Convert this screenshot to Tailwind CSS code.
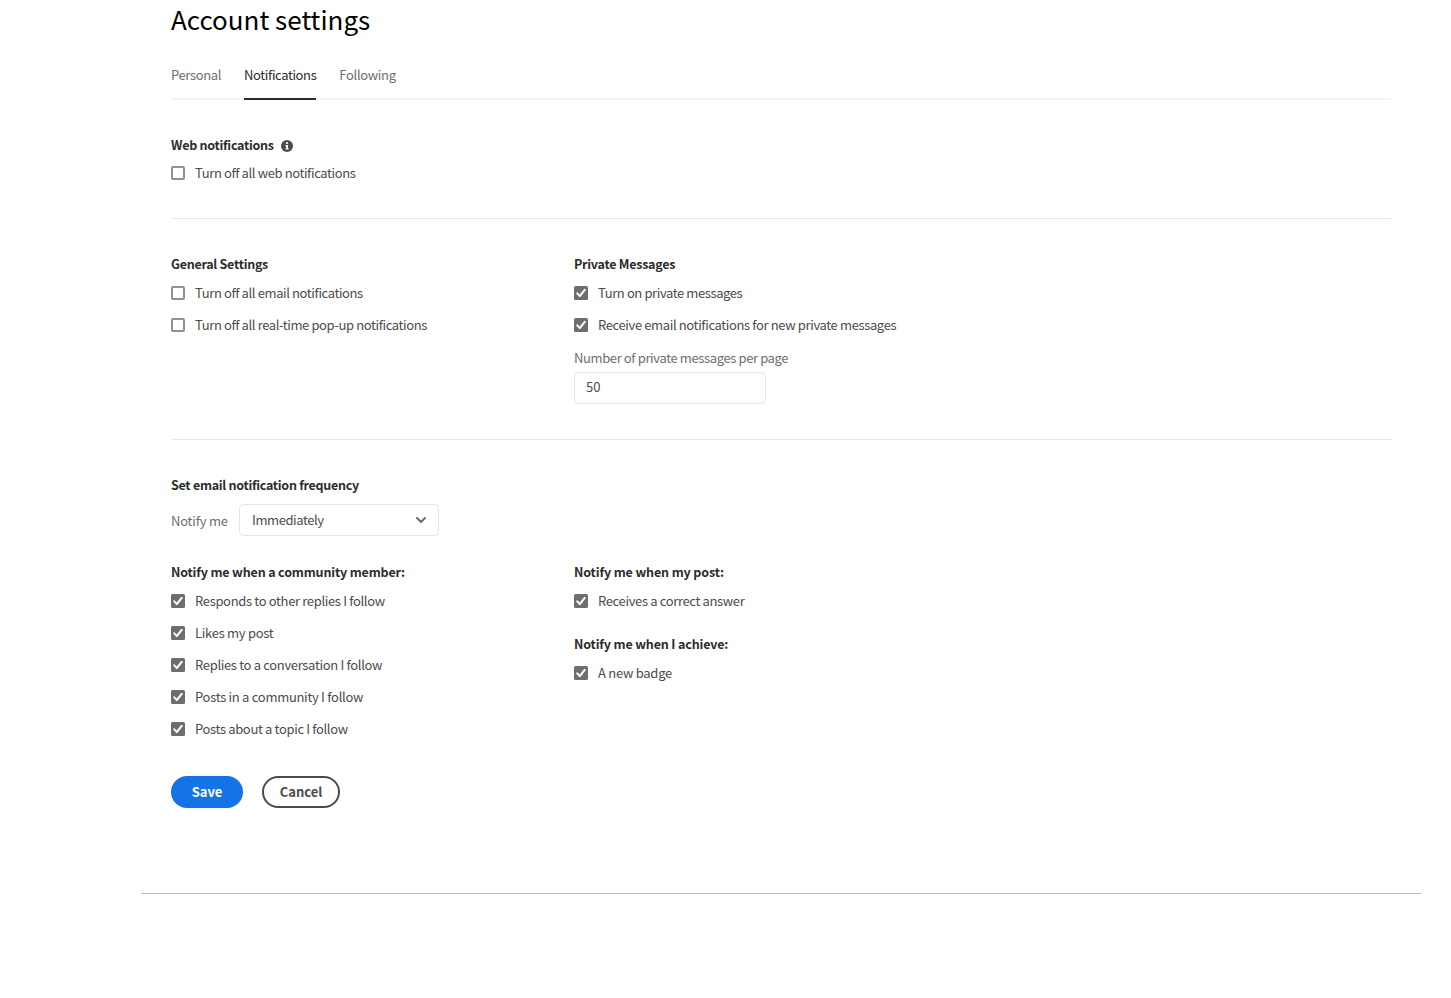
<!DOCTYPE html>
<html lang="en">
<head>
  <meta charset="UTF-8">
  <meta name="viewport" content="width=device-width, initial-scale=1.0">
  <title>Account settings</title>
  <script src="https://cdn.jsdelivr.net/npm/@tailwindcss/browser@4"></script>
</head>
<body class="min-h-screen bg-white overflow-hidden font-['Noto_Sans_CJK_SC','Noto_Sans',sans-serif] text-[13px] leading-5 text-[#4b4b4b]">
  <!-- Shared icons -->
  <svg class="hidden">
    <symbol id="check" viewBox="0 0 14 14">
      <rect width="14" height="14" rx="1.5" fill="#6e6e6e"/>
      <path d="M3.3 7.3L5.8 10.1L10.7 3.9" fill="none" stroke="#fff" stroke-width="2" stroke-linecap="round" stroke-linejoin="round"/>
    </symbol>
    <symbol id="box" viewBox="0 0 14 14">
      <rect x="1" y="1" width="12" height="12" rx="1" fill="#fff" stroke="#909090" stroke-width="2"/>
    </symbol>
  </svg>

  <main class="ml-[141px] w-[1280px] h-[894px] px-[30px] border-b border-[#bcbcbc]">
    <h1 class="h-10 pt-px text-[26px] leading-9 text-black">Account settings</h1>

    <nav class="flex gap-[23px] h-[60px] border-b-2 border-[#f4f4f4] pt-[25px] text-[#6e6e6e]">
      <a href="#" class="tracking-[-0.36px]">Personal</a>
      <a href="#" class="h-[35px] border-b-2 border-[#2c2c2c] text-[#2c2c2c] tracking-[-0.39px]">Notifications</a>
      <a href="#" class="tracking-[-0.33px]">Following</a>
    </nav>

    <section class="h-[119px] pt-[35px] border-b border-[#e6e6e6]">
      <h2 class="flex items-center font-bold text-[12.5px] text-[#2c2c2c]">
        <span class="tracking-[-0.27px]">Web notifications</span>
        <svg class="ml-[7px] mt-px size-3" viewBox="0 0 12 12">
          <circle cx="6" cy="6" r="6" fill="#4b4b4b"/>
          <circle cx="6" cy="3" r="1.1" fill="#fff"/>
          <path d="M4.5 5H7V8.4H7.8V9.6H4.4V8.4H5.2V6.2H4.5Z" fill="#fff"/>
        </svg>
      </h2>
      <label class="flex items-center gap-2.5 mt-2"><svg class="size-3.5"><use href="#box"/></svg><span class="tracking-[-0.39px]">Turn off all web notifications</span></label>
    </section>

    <section class="grid grid-cols-[403px_1fr] h-[221px] pt-[35px] border-b border-[#e6e6e6]">
      <div>
        <h2 class="font-bold text-[12.5px] text-[#2c2c2c] tracking-[-0.27px]">General Settings</h2>
        <div class="flex flex-col gap-3 mt-[9px]">
          <label class="flex items-center gap-2.5"><svg class="size-3.5"><use href="#box"/></svg><span class="tracking-[-0.39px]">Turn off all email notifications</span></label>
          <label class="flex items-center gap-2.5"><svg class="size-3.5"><use href="#box"/></svg><span class="tracking-[-0.39px]">Turn off all real-time pop-up notifications</span></label>
        </div>
      </div>
      <div>
        <h2 class="font-bold text-[12.5px] text-[#2c2c2c] tracking-[-0.25px]">Private Messages</h2>
        <div class="flex flex-col gap-3 mt-[9px]">
          <label class="flex items-center gap-2.5"><svg class="size-3.5"><use href="#check"/></svg><span class="tracking-[-0.4px]">Turn on private messages</span></label>
          <label class="flex items-center gap-2.5"><svg class="size-3.5"><use href="#check"/></svg><span class="tracking-[-0.37px]">Receive email notifications for new private messages</span></label>
        </div>
        <p class="mt-[13px] text-[#6e6e6e] tracking-[-0.38px]">Number of private messages per page</p>
        <div class="flex items-center w-48 h-8 mt-1 px-[11px] pb-0.5 border border-[#e6e6e6] rounded">50</div>
      </div>
    </section>

    <section class="pt-[35px]">
      <h2 class="font-bold text-[12.5px] text-[#2c2c2c] tracking-[-0.28px]">Set email notification frequency</h2>
      <div class="flex items-center mt-[9px]">
        <span class="w-[68px] pt-0.5 text-[#6e6e6e] tracking-[-0.22px]">Notify me</span>
        <div class="flex items-center justify-between w-[200px] h-8 px-3 border border-[#e6e6e6] rounded">
          <span class="tracking-[-0.42px]">Immediately</span>
          <svg class="w-[10px] h-1.5" viewBox="0 0 10 6"><path d="M1 1L5 5L9 1" fill="none" stroke="#6e6e6e" stroke-width="2" stroke-linecap="round" stroke-linejoin="round"/></svg>
        </div>
      </div>
    </section>

    <section class="grid grid-cols-[403px_1fr] pt-[26px]">
      <div>
        <h2 class="font-bold text-[12.5px] text-[#2c2c2c] tracking-[-0.16px]">Notify me when a community member:</h2>
        <div class="flex flex-col gap-3 mt-[9px]">
          <label class="flex items-center gap-2.5"><svg class="size-3.5"><use href="#check"/></svg><span class="tracking-[-0.34px]">Responds to other replies I follow</span></label>
          <label class="flex items-center gap-2.5"><svg class="size-3.5"><use href="#check"/></svg><span class="tracking-[-0.28px]">Likes my post</span></label>
          <label class="flex items-center gap-2.5"><svg class="size-3.5"><use href="#check"/></svg><span class="tracking-[-0.33px]">Replies to a conversation I follow</span></label>
          <label class="flex items-center gap-2.5"><svg class="size-3.5"><use href="#check"/></svg><span class="tracking-[-0.29px]">Posts in a community I follow</span></label>
          <label class="flex items-center gap-2.5"><svg class="size-3.5"><use href="#check"/></svg><span class="tracking-[-0.35px]">Posts about a topic I follow</span></label>
        </div>
      </div>
      <div>
        <h2 class="font-bold text-[12.5px] text-[#2c2c2c] tracking-[-0.13px]">Notify me when my post:</h2>
        <label class="flex items-center gap-2.5 mt-[9px]"><svg class="size-3.5"><use href="#check"/></svg><span class="tracking-[-0.35px]">Receives a correct answer</span></label>
        <h2 class="mt-[23px] font-bold text-[12.5px] text-[#2c2c2c] tracking-[-0.15px]">Notify me when I achieve:</h2>
        <label class="flex items-center gap-2.5 mt-[9px]"><svg class="size-3.5"><use href="#check"/></svg><span class="tracking-[-0.27px]">A new badge</span></label>
      </div>
    </section>

    <div class="flex gap-[19px] mt-[37px] font-bold">
      <button class="w-[72px] h-8 rounded-full bg-[#1473e6] text-white">Save</button>
      <button class="w-[78px] h-8 rounded-full border-2 border-[#4b4b4b]">Cancel</button>
    </div>
  </main>
</body>
</html>
